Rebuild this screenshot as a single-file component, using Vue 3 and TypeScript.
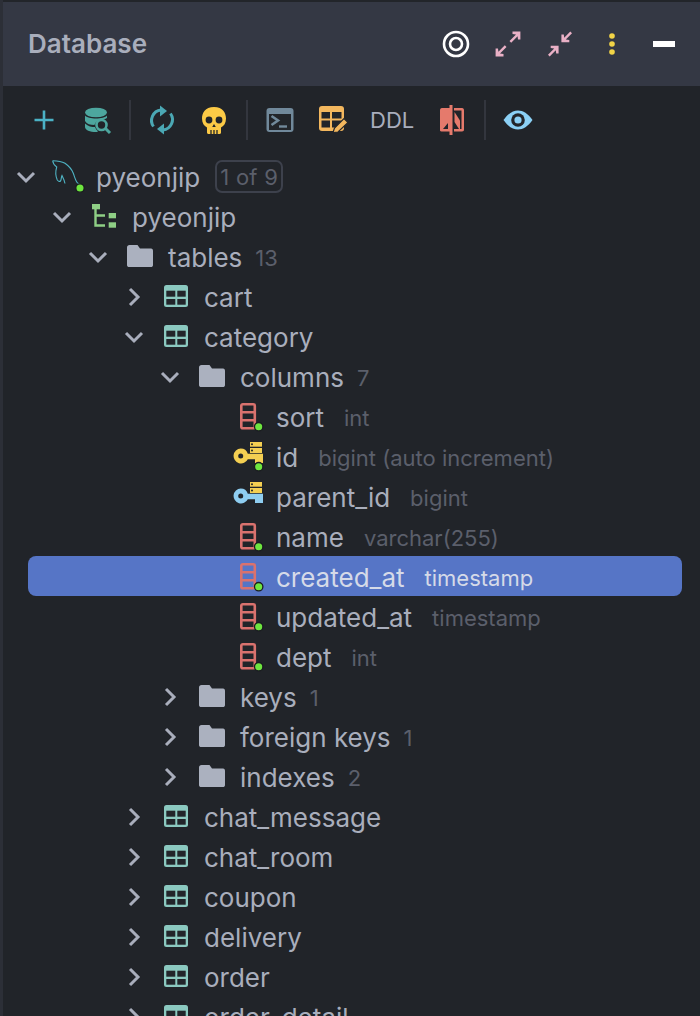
<script setup lang="ts">
type RowIcon = 'mysql' | 'schema' | 'folder' | 'table' | 'column' | 'keyYellow' | 'keyBlue'

interface Row {
  level: number
  name: string
  icon: RowIcon
  open?: boolean
  leaf?: boolean
  count?: string
  type?: string
  badge?: string
  selected?: boolean
}

const rows: Row[] = [
  { level: 0, name: 'pyeonjip', icon: 'mysql', open: true, badge: '1 of 9' },
  { level: 1, name: 'pyeonjip', icon: 'schema', open: true },
  { level: 2, name: 'tables', icon: 'folder', open: true, count: '13' },
  { level: 3, name: 'cart', icon: 'table' },
  { level: 3, name: 'category', icon: 'table', open: true },
  { level: 4, name: 'columns', icon: 'folder', open: true, count: '7' },
  { level: 5, name: 'sort', icon: 'column', leaf: true, type: 'int' },
  { level: 5, name: 'id', icon: 'keyYellow', leaf: true, type: 'bigint (auto increment)' },
  { level: 5, name: 'parent_id', icon: 'keyBlue', leaf: true, type: 'bigint' },
  { level: 5, name: 'name', icon: 'column', leaf: true, type: 'varchar(255)' },
  { level: 5, name: 'created_at', icon: 'column', leaf: true, type: 'timestamp', selected: true },
  { level: 5, name: 'updated_at', icon: 'column', leaf: true, type: 'timestamp' },
  { level: 5, name: 'dept', icon: 'column', leaf: true, type: 'int' },
  { level: 4, name: 'keys', icon: 'folder', count: '1' },
  { level: 4, name: 'foreign keys', icon: 'folder', count: '1' },
  { level: 4, name: 'indexes', icon: 'folder', count: '2' },
  { level: 3, name: 'chat_message', icon: 'table' },
  { level: 3, name: 'chat_room', icon: 'table' },
  { level: 3, name: 'coupon', icon: 'table' },
  { level: 3, name: 'delivery', icon: 'table' },
  { level: 3, name: 'order', icon: 'table' },
  { level: 3, name: 'order_detail', icon: 'table' },
]
</script>

<template>
  <div class="panel">
    <header class="head">
      <span class="title">Database</span>
      <div class="head-icons">
        <svg class="hicon" viewBox="0 0 32 32">
          <circle cx="16" cy="16" r="12" fill="none" stroke="#fff" stroke-width="2.6" />
          <circle cx="16" cy="16" r="6" fill="none" stroke="#fff" stroke-width="2.6" />
        </svg>
        <svg class="hicon" viewBox="0 0 32 32" fill="#e9b0c6">
          <path d="M17.5 13 L24 6.5 L20.5 6 L20.5 3.6 L28.4 3.6 L28.4 11.5 L26 11.5 L25.6 8.2 L19.2 14.7 Z" />
          <path d="M14.5 19 L8 25.5 L11.500 26 L11.500 28.400 L3.600 28.400 L3.600 20.500 L6 20.500 L6.400 23.800 L12.800 17.300 Z" />
        </svg>
        <svg class="hicon" viewBox="0 0 32 32" fill="#e9b0c6">
          <path d="M28 5.300 L21.800 11.500 L25.300 11.900 L25.300 14.300 L17.400 14.300 L17.400 6.400 L19.800 6.400 L20.200 9.800 L26.300 3.600 Z" />
          <path d="M4 26.700 L10.200 20.500 L6.700 20.100 L6.700 17.700 L14.600 17.700 L14.600 25.600 L12.200 25.600 L11.800 22.200 L5.700 28.400 Z" />
        </svg>
        <svg class="hicon" viewBox="0 0 32 32" fill="#f2d447">
          <circle cx="16" cy="8" r="2.800" />
          <circle cx="16" cy="16" r="2.800" />
          <circle cx="16" cy="24" r="2.800" />
        </svg>
        <span class="minus"></span>
      </div>
    </header>

    <div class="toolbar">
      <svg class="tool" viewBox="0 0 36 36">
        <path d="M18 8.500 V27.500 M8.500 18 H27.500" stroke="#4bb2c6" stroke-width="2.600" fill="none" />
      </svg>
      <svg class="tool tool-gap" viewBox="0 0 36 36">
        <ellipse cx="16" cy="10.500" rx="11" ry="4.800" fill="#4da69e" />
        <path d="M5 13.500 C8 17.500 24 17.500 27 13.500 V16 C24 18 20 18 17 19.500 C15 21 14.500 22.500 14.500 23 C10 23 7 22 5 19 Z" fill="#4da69e" />
        <path d="M5 21.500 C8 24.500 12 25 15 25 C15.500 26.500 16.500 28 18 29 C17.500 30 17 30 16 30 C10 30 5 28 5 25 Z" fill="#4da69e" />
        <circle cx="21.500" cy="23" r="5" fill="none" stroke="#4da69e" stroke-width="2.600" />
        <path d="M25.500 26.500 L30 31" stroke="#4da69e" stroke-width="3" />
      </svg>
      <span class="sep"></span>
      <svg class="tool" viewBox="0 0 36 36" fill="none" stroke="#4ba8b4" stroke-width="3">
        <path d="M9.500 24.500 A10.500 10.500 0 0 1 17 8" />
        <path d="M16 3.500 L23 9 L16 14.500 Z" fill="#4ba8b4" stroke="none" />
        <path d="M26.500 11.500 A10.500 10.500 0 0 1 19 28" />
        <path d="M20 21.500 L13 27 L20 32.500 Z" fill="#4ba8b4" stroke="none" />
      </svg>
      <svg class="tool tool-gap-s" viewBox="0 0 36 36">
        <path d="M18 5 C9 5 6 11 6 16.500 C6 21 8 24 11 25.500 L11 30.500 C11 31.500 12 32 13 32 H23 C24 32 25 31.500 25 30.500 L25 25.500 C28 24 30 21 30 16.500 C30 11 27 5 18 5 Z" fill="#fcca46" />
        <circle cx="13" cy="18" r="3.400" fill="#22252a" />
        <circle cx="23" cy="18" r="3.400" fill="#22252a" />
        <path d="M18 22 L19.800 25 H16.200 Z" fill="#22252a" />
        <path d="M15 28 V32 M18 28 V32 M21 28 V32" stroke="#22252a" stroke-width="1.300" />
      </svg>
      <span class="sep sep-s"></span>
      <svg class="tool" viewBox="0 0 36 36">
        <rect x="4.500" y="6" width="27" height="24" rx="3" fill="#71899b" />
        <rect x="7" y="12" width="22" height="16" fill="#22252a" />
        <path d="M9.500 14 L16 18.500 L9.500 23" stroke="#71899b" stroke-width="2.600" fill="none" />
        <path d="M17 24.500 H25" stroke="#71899b" stroke-width="2.400" />
      </svg>
      <svg class="tool tool-gap" viewBox="0 0 36 36">
        <rect x="3" y="4" width="25" height="25" rx="3" fill="#f3b75e" />
        <rect x="5.500" y="10" width="8.500" height="6.500" fill="#22252a" />
        <rect x="16" y="10" width="9.500" height="6.500" fill="#22252a" />
        <rect x="5.500" y="18.500" width="8.500" height="7" fill="#22252a" />
        <rect x="16" y="18.500" width="9.500" height="7" fill="#22252a" />
        <path d="M17 30.500 L18.500 26 L28 16.500 L32 20.500 L22 30 Z" fill="#f3b75e" stroke="#22252a" stroke-width="1.200" />
      </svg>
      <span class="ddl">DDL</span>
      <svg class="tool tool-gap-l" viewBox="0 0 36 36">
        <path d="M15.500 3 H18.500 V33 H15.500 V29.500 H7.500 C6 29.500 6 28.500 6 27.500 V8.500 C6 7 6.500 6 8 6 H15.500 Z" fill="#e57a6c" />
        <path d="M14 21 V27 H9 Z" fill="#22252a" />
        <path d="M20 6 H28 C29.500 6 30 7 30 8.500 V27.500 C30 28.500 29.500 29.500 28 29.500 H20 V27 H27.500 V8.500 H20 Z" fill="#e57a6c" />
        <path d="M20.500 10 L26 18.500 V27 H25 L20.500 20 Z" fill="#e57a6c" />
      </svg>
      <span class="sep sep-s"></span>
      <svg class="tool" viewBox="0 0 36 36">
        <path d="M3.500 18 C8 11.500 13 8.500 18 8.500 C23 8.500 28 11.500 32.500 18 C28 24.500 23 27.500 18 27.500 C13 27.500 8 24.500 3.500 18 Z" fill="#8bd0f5" />
        <circle cx="18" cy="18" r="6.800" fill="#22252a" />
        <circle cx="18" cy="18" r="3.600" fill="#8bd0f5" />
      </svg>
    </div>

    <ul class="tree">
      <li
        v-for="(row, i) in rows"
        :key="i"
        class="row"
        :class="{ selected: row.selected }"
        :style="{ paddingLeft: 8 + row.level * 36 + 'px' }"
      >
        <span class="arrow">
          <template v-if="!row.leaf">
            <svg v-if="row.open" viewBox="0 0 22 22" class="chev">
              <path d="M3 7 L11 15 L19 7" />
            </svg>
            <svg v-else viewBox="0 0 22 22" class="chev">
              <path d="M7 3 L15 11 L7 19" />
            </svg>
          </template>
        </span>

        <svg class="icon" viewBox="0 0 32 32">
          <template v-if="row.icon === 'mysql'">
            <g fill="none" stroke="#4fb4c4" stroke-width="1.100">
              <path d="M0.700 -0.300 C5 -0.300 10 0.500 13 2.300 C17.500 5.500 20 9 21.300 12.300 C22.500 15.500 23.500 19.500 25.300 21.700 C26.500 23 28 23.500 29.700 24.500" />
              <path d="M0.700 -0.300 C1 2 2.500 4.500 4.700 6 C3.500 10 3.500 15 5.300 19 C6 20 7.500 21 8.500 20 C9.500 18.500 9 16.500 10 14.500 C11 16.500 12.500 20 13 22.500" />
            </g>
            <circle cx="28" cy="27" r="4.200" fill="#6ee63f" stroke="#1a1c20" stroke-width="1.300" />
          </template>
          <template v-else-if="row.icon === 'schema'">
            <rect x="4" y="3" width="8" height="5.300" fill="#8fcf85" />
            <path d="M7.500 8 V24.500 H17 M7.500 14.500 H17" fill="none" stroke="#8fcf85" stroke-width="2.400" />
            <rect x="20.700" y="12" width="7.300" height="5.300" fill="#8fcf85" />
            <rect x="20.700" y="21.300" width="7.300" height="5.400" fill="#8fcf85" />
          </template>
          <template v-else-if="row.icon === 'folder'">
            <path d="M3 6.500 C3 5 4 4 5.500 4 H13.500 L16 7.500 H27 C28.500 7.500 29 8.500 29 10 V24 C29 25.500 28 26 27 26 H5 C4 26 3 25.500 3 24 Z" fill="#abb1bf" />
          </template>
          <template v-else-if="row.icon === 'table'">
            <rect x="4" y="4" width="24" height="22" rx="2.500" fill="#8bc9c0" />
            <rect x="6.300" y="9.700" width="9" height="6" fill="#22252a" />
            <rect x="17.300" y="9.700" width="8.400" height="6" fill="#22252a" />
            <rect x="6.300" y="18" width="9" height="5.700" fill="#22252a" />
            <rect x="17.300" y="18" width="8.400" height="5.700" fill="#22252a" />
          </template>
          <template v-else-if="row.icon === 'column'">
            <rect x="9.300" y="3.300" width="13.500" height="24" rx="1.500" fill="none" stroke="#d9726e" stroke-width="2.600" />
            <path d="M9.300 11.300 H22.800 M9.300 19.300 H22.800" stroke="#d9726e" stroke-width="2.600" />
            <circle cx="26.700" cy="25.700" r="4.200" fill="#6ee63f" stroke="#1a1c20" stroke-width="1.300" />
          </template>
          <template v-else>
            <path
              :fill="row.icon === 'keyYellow' ? '#f4cf52' : '#8ecdf0'"
              fill-rule="evenodd"
              d="M8.700 7.500 A7.500 7.500 0 0 1 15.800 12.800 H31 V18.300 H31 V22 H23 V18.300 H15.800 A7.500 7.500 0 1 1 8.700 7.500 Z M8.700 12.500 A2.500 2.500 0 1 0 8.700 17.500 A2.500 2.500 0 1 0 8.700 12.500 Z"
            />
            <rect x="18" y="1" width="12" height="4.700" fill="#f4cf52" />
            <rect x="18" y="7" width="12" height="5" fill="#f4cf52" />
            <circle cx="20" cy="3.300" r="1" fill="#22252a" />
            <circle cx="20" cy="9.500" r="1" fill="#22252a" />
            <circle v-if="row.icon === 'keyYellow'" cx="26.700" cy="25.700" r="4.200" fill="#6ee63f" stroke="#1a1c20" stroke-width="1.300" />
          </template>
        </svg>

        <span class="name">{{ row.name }}</span>
        <span v-if="row.count" class="count">{{ row.count }}</span>
        <span v-if="row.type" class="type">{{ row.type }}</span>
        <span v-if="row.badge" class="badge">{{ row.badge }}</span>
      </li>
    </ul>
  </div>
</template>

<style scoped>
.panel {
  width: 700px;
  height: 1016px;
  overflow: hidden;
  background: #212429;
  border-left: 3px solid #2c2f37;
  box-sizing: border-box;
  font-family: Inter, "Liberation Sans", sans-serif;
}

.head {
  margin-left: -1px;
  height: 86px;
  display: flex;
  align-items: center;
  justify-content: space-between;
  background: #343844;
  border-top: 2px solid #22252a;
  box-sizing: border-box;
  padding-left: 26px;
}

.title {
  margin-bottom: 2px;
  font-size: 26px;
  font-weight: 600;
  color: #a9aebc;
}

.head-icons {
  display: flex;
  align-items: center;
  gap: 20px;
  padding-right: 25px;
}

.hicon {
  width: 32px;
  height: 32px;
  display: block;
}

.minus {
  width: 22px;
  height: 6px;
  margin-left: 5px;
  background: #fff;
}

.toolbar {
  height: 71px;
  box-sizing: border-box;
  padding-bottom: 4px;
  display: flex;
  align-items: center;
  padding-left: 23px;
}

.tool {
  width: 36px;
  height: 36px;
  flex: none;
  display: block;
}

.tool-gap {
  margin-left: 18px;
}

.tool-gap-s {
  margin-left: 16px;
}

.tool-gap-l {
  margin-left: 20px;
}

.sep {
  width: 2px;
  height: 40px;
  margin: 0 13px;
  background: #33363e;
}

.sep-s {
  margin: 0 14px;
}

.ddl {
  margin-left: 18px;
  width: 44px;
  font-size: 22px;
  color: #a9aebc;
}

.tree {
  list-style: none;
  margin: -1px 0 0 -3px;
  padding: 0;
  width: 700px;
}

.row {
  position: relative;
  z-index: 0;
  height: 40px;
  display: flex;
  align-items: center;
  box-sizing: border-box;
  padding-top: 2px;
  white-space: nowrap;
  font-size: 26px;
  color: #a9aebc;
}

.selected::before {
  content: "";
  position: absolute;
  z-index: -1;
  top: 0;
  bottom: 0;
  left: 28px;
  right: 18px;
  border-radius: 8px;
  background: #5675c6;
}

.selected .name {
  color: #d5dae8;
}

.selected .type {
  color: #d5dae8;
}

.arrow {
  width: 36px;
  height: 22px;
  flex: none;
  display: flex;
  justify-content: center;
}

.chev {
  width: 22px;
  height: 22px;
  fill: none;
  stroke: #a9aebc;
  stroke-width: 3;
}

.icon {
  width: 32px;
  height: 32px;
  flex: none;
  margin-left: 8px;
  margin-right: 12px;
  overflow: visible;
}

.count {
  margin-left: 13px;
  margin-top: 2px;
  font-size: 22px;
  color: #5b5f6b;
}

.type {
  margin-left: 20px;
  margin-top: 2px;
  font-size: 22px;
  color: #5b5f6b;
}

.badge {
  margin-left: 15px;
  margin-bottom: 2px;
  padding: 0 3px 0 3px;
  height: 33px;
  box-sizing: border-box;
  border: 2px solid #3d414c;
  border-radius: 7px;
  font-size: 22px;
  letter-spacing: 0.3px;
  line-height: 31px;
  color: #5b5f6b;
}
</style>

<style>
html,
body {
  margin: 0;
  background: #212429;
}
</style>
